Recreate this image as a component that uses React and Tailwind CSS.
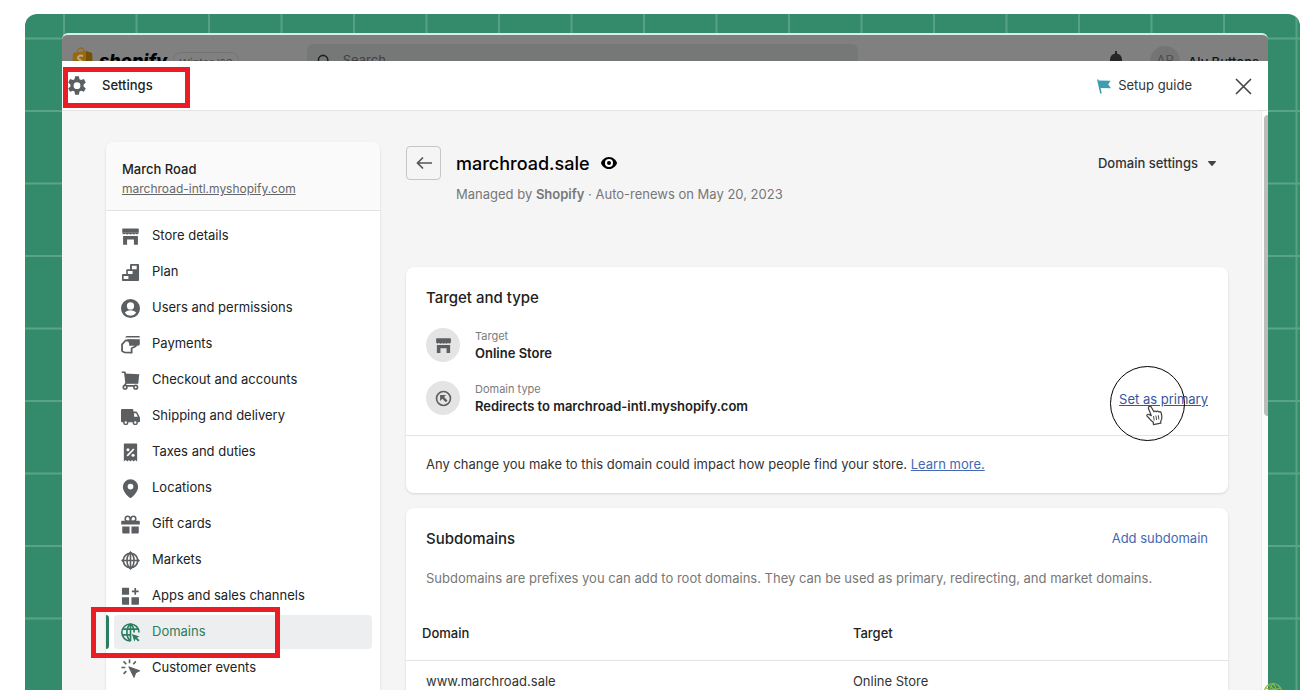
import React from "react";

function Icon({ children, className = "size-[19px]" }) {
  return (
    <svg viewBox="0 0 20 20" fill="currentColor" aria-hidden="true" className={`shrink-0 ${className}`}>
      {children}
    </svg>
  );
}

const storePaths = (
  <>
    <path d="M2 1.5h16a.7.7 0 0 1 .7.7V6h-17.4V2.2a.7.7 0 0 1 .7-.7Z" />
    <path d="M1.3 6h17.4a1.9 1.9 0 0 1-3.5.8 1.9 1.9 0 0 1-3.4 0 1.9 1.9 0 0 1-3.5 0 1.9 1.9 0 0 1-3.5 0A1.9 1.9 0 0 1 1.3 6Z" />
    <path d="M2.2 9.4h15.6v9.4h-4.2v-5.6H6.4v5.6H2.2Z" />
  </>
);

const icons = {
  store: storePaths,
  plan: (
    <path
      fillRule="evenodd"
      d="M10.5 1H18a1 1 0 0 1 1 1v16a1 1 0 0 1-1 1H2a1 1 0 0 1-1-1v-5.500a1 1 0 0 1 1-1h3.500V7.500a1 1 0 0 1 1-1h3V2a1 1 0 0 1 1-1ZM11.500 3v3.500h5V3Zm-4.300 5.300v3.400h5V8.300Zm-4.400 5.400v3.200h5v-3.200Z"
    />
  ),
  user: (
    <path
      fillRule="evenodd"
      d="M10 0a10 10 0 1 0 0 20 10 10 0 0 0 0-20Zm0 3.500a3.800 3.800 0 1 1 0 7.600 3.800 3.800 0 0 1 0-7.600Zm0 14.200a7.500 7.500 0 0 1-6-3.100c1.200-1.700 3.400-2.700 6-2.700s4.800 1 6 2.700a7.500 7.500 0 0 1-6 3.100Z"
    />
  ),
  payments: (
    <>
      <path d="M6 1h13a.8.8 0 0 1 .8.8v.9H4.600A2 2 0 0 1 6 1Z" />
      <path d="M6.500 4.600h13.300v5a1.800 1.800 0 0 1-1.800 1.800h-3.500v-2H8.800Z" />
      <path
        d="M1.100 9.800 4.800 5.800h9.400v2.900H9.900l-.5 1.600h6.100v1.600l-4.300 2v4.700l-7.800-.4-2.300-1.300Z"
        fill="none"
        stroke="currentColor"
        strokeWidth="1.900"
        strokeLinejoin="round"
      />
    </>
  ),
  cart: (
    <>
      <path d="M3.800 2.600 19.200 3.500l-1 9.300H5.300Z" />
      <path d="M.8 1.300h3.300l1.300 11.300H18M5.400 12.600l-1.700 3.100h12.700" fill="none" stroke="currentColor" strokeWidth="1.800" strokeLinejoin="round" />
      <circle cx="4.300" cy="17" r="1.900" fill="white" stroke="currentColor" strokeWidth="1.700" />
      <circle cx="15.500" cy="17" r="1.900" fill="white" stroke="currentColor" strokeWidth="1.700" />
    </>
  ),
  truck: (
    <>
      <path fillRule="evenodd" d="M1 2.200h11a1 1 0 0 1 1 1v1.500h2.600c.7 0 1.300.4 1.600 1l2.500 4.800c.2.400.3.600.3 1V15a1 1 0 0 1-1 1H1a1 1 0 0 1-1-1V3.200a1 1 0 0 1 1-1Zm12.800 4.500v3.600h3.900l-1.800-3.600Z" />
      <circle cx="5" cy="16.300" r="2" fill="white" stroke="currentColor" strokeWidth="1.500" />
      <circle cx="15" cy="16.300" r="2" fill="white" stroke="currentColor" strokeWidth="1.500" />
    </>
  ),
  taxes: (
    <>
      <path d="M3.800.5h12.400a.8.8 0 0 1 .8.800V19.500l-2-1.500L13.200 19.500l-1.600-1.500L10 19.500l-1.600-1.500L6.800 19.500 5 18 3 19.500V1.300a.8.8 0 0 1 .8-.8Z" />
      <path d="m6.500 13.600 7-7.300" stroke="white" strokeWidth="1.800" />
      <circle cx="7.300" cy="7" r="1.600" fill="white" />
      <circle cx="12.700" cy="13" r="1.600" fill="white" />
    </>
  ),
  pin: <path fillRule="evenodd" d="M10 .3a8 8 0 0 0-8 8c0 4.700 4.600 9.300 6.800 11.200a1.800 1.800 0 0 0 2.400 0C13.400 17.600 18 13 18 8.300a8 8 0 0 0-8-8ZM10 11a3 3 0 1 1 0-6 3 3 0 0 1 0 6Z" />,
  gift: (
    <>
      <path d="M1.200 6h17.600a1 1 0 0 1 1 1v3H.2V7a1 1 0 0 1 1-1ZM1.300 12h7.700v7.500H2.300a1 1 0 0 1-1-1ZM11 12h7.700v6.500a1 1 0 0 1-1 1H11Z" />
      <path d="M9.600 6.600H6.700a2.600 2.600 0 1 1 2.900-2.800Zm.8 0h2.900a2.600 2.600 0 1 0-2.900-2.800Z" fill="none" stroke="currentColor" strokeWidth="1.600" />
    </>
  ),
  markets: (
    <>
      <g fill="none" stroke="currentColor" strokeWidth="1.700">
        <circle cx="10" cy="10" r="7.600" />
        <ellipse cx="10" cy="10" rx="3.700" ry="7.600" />
        <path d="M10 2v16M2 10h16" />
      </g>
      <path d="m10 0 2.400 2.700H7.600ZM10 20l2.400-2.700H7.600ZM0 10l2.700-2.400v4.800ZM20 10l-2.700-2.400v4.800Z" />
    </>
  ),
  apps: (
    <>
      <path d="M1.800.8h6.700v7.400H1V1.600a.8.8 0 0 1 .8-.8ZM1 10.800h7.500v8H1.800a.8.8 0 0 1-.8-.8ZM11 10.800h7.900V18a.8.8 0 0 1-.8.8H11Z" />
      <path d="M15 1v7.200M11.400 4.600h7.200" stroke="currentColor" strokeWidth="1.800" />
    </>
  ),
  domains: (
    <>
      <g fill="none" stroke="currentColor" strokeWidth="1.700">
        <path d="M18.900 10A9 9 0 1 0 10 19" />
        <path d="M10 1C7.500 3 6.200 6.300 6.200 10s1.300 7 3.800 9M10 1c2.400 2 3.800 5 3.900 9M10 1v9M1.900 6.500h16.200M1 12.500h9M10 10v9" />
      </g>
      <path d="m11.500 11.500 8 2.600-2.700 1.400 2.700 2.600-1.500 1.500-2.600-2.700-1.400 2.600Z" />
    </>
  ),
  events: (
    <>
      <path d="m8.200 8.200 11.600 4.200-4.300 2.200-1.800 4.900Z" strokeLinejoin="round" stroke="currentColor" />
      <path d="M9 .4v4.200M2.700 2.500l2.900 3M15.600 2.500l-2.700 3M.4 9h4.200M2.700 15.700l2.900-2.900" stroke="currentColor" strokeWidth="1.700" fill="none" />
    </>
  ),
  gear: (
    <path
      fillRule="evenodd"
      d="M8.100.3h3.800l.6 2.900 1.600.9 2.800-1 1.900 3.300-2.200 2v2l2.200 2-1.900 3.300-2.800-1-1.600.9-.6 3.100H8.100l-.6-3.100-1.600-.9-2.800 1-1.900-3.300 2.200-2v-2l-2.200-2 1.900-3.300 2.800 1 1.600-.9ZM10 6.300a3.400 3.400 0 1 0 0 6.800 3.400 3.400 0 0 0 0-6.800Z"
    />
  ),
};

const navItems = [
  ["store", "Store details"],
  ["plan", "Plan"],
  ["user", "Users and permissions"],
  ["payments", "Payments"],
  ["cart", "Checkout and accounts"],
  ["truck", "Shipping and delivery"],
  ["taxes", "Taxes and duties"],
  ["pin", "Locations"],
  ["gift", "Gift cards"],
  ["markets", "Markets"],
  ["apps", "Apps and sales channels"],
  ["domains", "Domains"],
  ["events", "Customer events"],
];

function GridBackdrop() {
  return (
    <svg className="absolute inset-0 size-full" aria-hidden="true">
      <defs>
        <pattern id="grid" x="38" y="23.500" width="72.500" height="72.500" patternUnits="userSpaceOnUse">
          <path d="M1 0v72.500M0 1h72.500" stroke="#58a586" strokeWidth="1.800" />
        </pattern>
      </defs>
      <rect width="100%" height="100%" fill="url(#grid)" />
    </svg>
  );
}

function AdminBar() {
  return (
    <div className="flex h-[28px] items-start overflow-hidden rounded-t-md border-t-2 border-[#dcebe4] bg-[#808080] pl-[10px] pr-[9px] text-[#151515]">
      <svg viewBox="0 0 21 24" className="mt-[12px] h-[24px] w-[21px] shrink-0" aria-hidden="true">
        <path d="m1 6 13-2 6 2 1 18H0Z" fill="#98690f" />
        <path d="m14 4 6 2 1 18h-7Z" fill="#75500b" />
        <path d="M5 6c0-3 2-5 4-5s3 2 3 4" fill="none" stroke="#98690f" strokeWidth="1.300" />
        <path d="M11 9c-3-1-5 0-5 2s4 2 4 4-3 2-5 1" fill="none" stroke="#b9aa8d" strokeWidth="2" />
      </svg>
      <span className="mt-[12px] ml-[6px] text-[18px] leading-7 font-extrabold italic text-black">shopify</span>
      <span className="mt-[17px] ml-[6px] rounded-lg border border-[#747474] px-[5px] text-[11px] leading-[20px] text-[#4a4a4a]">Winter ’23</span>
      <div className="mt-[9px] ml-[68px] flex h-[34px] w-[551px] items-center gap-[11px] rounded-md bg-[#767877] pl-[10px] text-[13px] text-[#414141]">
        <svg viewBox="0 0 16 16" className="size-[15px]" fill="none" stroke="#222" strokeWidth="1.700" aria-hidden="true">
          <circle cx="6.500" cy="6.500" r="5" />
          <path d="m10 10 5 5" />
        </svg>
        <span>Search</span>
      </div>
      <svg viewBox="0 0 14 20" className="mt-[16px] ml-auto h-[20px] w-[14px] shrink-0" fill="#262626" aria-hidden="true">
        <path d="M6 0h2v2.500c3 .6 5 3 5 6V14l1 2H0l1-2V8.500c0-3 2-5.400 5-6Z" />
      </svg>
      <span className="mt-[11px] ml-[27px] flex size-[30px] items-center justify-center rounded-full bg-[#747474] text-[13px] text-[#4d4d4d]">AR</span>
      <span className="mt-[17px] ml-[8px] text-[13px] leading-5 font-medium">Aly Buttons</span>
    </div>
  );
}

function SettingsBar() {
  return (
    <header className="relative flex h-[50px] items-center border-b border-[#e3e3e3] bg-white pt-px pr-[16px] pl-[5px]">
      <Icon className="size-[20px] text-[#5c5f62]">{icons.gear}</Icon>
      <h1 className="ml-[15px] text-[13px] font-medium">Settings</h1>
      <div className="absolute top-[6px] left-[1px] h-[41px] w-[127px] border-5 border-[#ea1c24]" />
      <button className="ml-auto flex items-center gap-[7px] text-[13px] text-[#333]">
        <svg viewBox="0 0 14 15" className="h-[15px] w-[14px]" fill="#3f9db0" aria-hidden="true">
          <path d="M0 .5h1.300l.3 1L13.500 1.700 11.200 5.400 14 9.300 3.600 9l1.200 5.500H3.200Z" />
        </svg>
        Setup guide
      </button>
      <button aria-label="Close" className="ml-[43px]">
        <svg viewBox="0 0 17 17" className="size-[17px]" fill="none" stroke="#444" strokeWidth="1.600" aria-hidden="true">
          <path d="m1 1 15 15M16 1 1 16" />
        </svg>
      </button>
    </header>
  );
}

function Sidebar() {
  return (
    <aside className="mt-[31px] w-[274px] shrink-0 rounded-t-lg bg-white shadow">
      <div className="rounded-t-lg border-b border-[#e3e3e3] bg-[#fafafa] px-[16px] pt-[18px] pb-[12px] leading-[19px]">
        <h2 className="text-[13px] font-medium">March Road</h2>
        <a href="#store" className="block text-[12px] text-[#666] underline">marchroad-intl.myshopify.com</a>
      </div>
      <nav aria-label="Settings" className="flex flex-col gap-[2px] px-[8px] pt-[8px]">
        {navItems.map(([key, label]) => {
          const active = key === "domains";
          return (
            <a
              key={key}
              href={`#${key}`}
              aria-current={active ? "page" : undefined}
              className={
                active
                  ? "relative flex h-[34px] items-center gap-[12px] rounded bg-[#edeeef] px-[7px] text-[13px] text-[#2b7d60]"
                  : "flex h-[34px] items-center gap-[12px] px-[7px] text-[13px] text-[#202223]"
              }
            >
              <Icon className={active ? "size-[19px] text-[#2b7d60]" : "size-[19px] text-[#5c5f62]"}>{icons[key]}</Icon>
              {label}
              {active && (
                <>
                  <span className="absolute top-0 left-[-8px] h-full w-[3px] rounded-r bg-[#2b7d60]" />
                  <span className="absolute top-[-8px] left-[-23px] h-[51px] w-[189px] border-5 border-[#ea1c24]" />
                </>
              )}
            </a>
          );
        })}
      </nav>
    </aside>
  );
}

function Detail({ icon, label, value, children }) {
  return (
    <div className="flex h-[34px] items-center">
      <span className="flex size-[34px] shrink-0 items-center justify-center rounded-full bg-[#e4e4e5] text-[#5c5f62]">{icon}</span>
      <dl className="ml-[15px]">
        <dt className="text-[11px] leading-[17px] text-[#7b7b7b]">{label}</dt>
        <dd className="text-[13px] leading-[17px] font-semibold">{value}</dd>
      </dl>
      {children}
    </div>
  );
}

function PointerMark() {
  return (
    <>
      <span className="pointer-events-none absolute top-[-20px] left-[-9px] size-[75px] rounded-full border border-black" />
      <svg viewBox="0 0 20 22" className="pointer-events-none absolute top-[19px] left-[25px] h-[21px] w-[20px]" aria-hidden="true">
        <path
          d="M5.200 1.500c-1.200.4-1.300 1.500-.9 2.500l2.900 7.200-1.700-.9c-1.700-1-3.300-.3-3 .9.200.9 1.500 1.500 2.500 2.800 1.400 1.800 2.500 3.300 4.200 4l.2 2.500 7.800-1.500-.2-2c1.100-1.600 1.500-3.200 1.200-5l-.7-3.700c-.3-1.700-2-1.800-2.400-.8-.4-1.200-2.100-1.400-2.600-.4-.6-1-2.200-1-2.600 0L7.600 2.800c-.4-1.100-1.300-1.700-2.400-1.300Z"
          fill="white"
          stroke="#444"
          strokeWidth="1.300"
          strokeLinejoin="round"
        />
        <path d="m9.500 11.500.7 4.700M12 11l.7 4.700M14.500 10.700l.6 4.400" stroke="#444" strokeWidth="1" />
      </svg>
    </>
  );
}

function TargetCard() {
  return (
    <section className="rounded-lg bg-white shadow">
      <div className="flex flex-col gap-[19px] px-[20px] pt-[19px] pb-[20px]">
        <h3 className="text-[15px] leading-[23px] font-medium">Target and type</h3>
        <Detail label="Target" value="Online Store" icon={<Icon className="size-[17px]">{storePaths}</Icon>} />
        <Detail
          label="Domain type"
          value="Redirects to marchroad-intl.myshopify.com"
          icon={
            <Icon className="size-[17px]">
              <circle cx="10" cy="10" r="8.200" fill="none" stroke="currentColor" strokeWidth="1.900" />
              <path d="M6 6h7l-2.300 2.300 4 4-2 2-4-4L6 13Z" />
            </Icon>
          }
        >
          <span className="relative ml-auto">
            <a href="#primary" className="text-[13px] text-[#36559c] underline">Set as primary</a>
            <PointerMark />
          </span>
        </Detail>
      </div>
      <p className="border-t border-[#e3e3e3] px-[20px] py-[19px] text-[13px] leading-[19px] text-[#333]">
        Any change you make to this domain could impact how people find your store.{" "}
        <a href="#learn" className="text-[#4468b4] underline">Learn more.</a>
      </p>
    </section>
  );
}

function SubdomainsCard() {
  return (
    <section className="mt-[15px] rounded-t-lg bg-white shadow">
      <div className="flex items-center justify-between px-[20px] pt-[19px]">
        <h3 className="text-[15px] leading-[23px] font-medium">Subdomains</h3>
        <button className="text-[13px] text-[#4468b4]">Add subdomain</button>
      </div>
      <p className="px-[20px] pt-[19px] text-[13px] leading-[19px] text-[#777]">
        Subdomains are prefixes you can add to root domains. They can be used as primary, redirecting, and market domains.
      </p>
      <table className="mt-[19px] w-full table-fixed text-left text-[13px]">
        <thead>
          <tr className="h-[53px] border-b border-[#e3e3e3]">
            <th className="w-[54%] pl-[16px] font-medium">Domain</th>
            <th className="pl-[3px] font-medium">Target</th>
          </tr>
        </thead>
        <tbody>
          <tr className="h-[43px] text-[#333]">
            <td className="pl-[20px]">www.marchroad.sale</td>
            <td className="pl-[3px]">Online Store</td>
          </tr>
        </tbody>
      </table>
    </section>
  );
}

function DomainPage() {
  return (
    <main className="mt-[35px] min-w-0 flex-1">
      <div className="flex h-[121px] items-start">
        <button aria-label="Back" className="flex h-[34px] w-[35px] items-center justify-center rounded border border-[#c4c6c8] text-[#555]">
          <svg viewBox="0 0 16 14" className="h-[14px] w-[16px]" fill="none" stroke="currentColor" strokeWidth="1.700" aria-hidden="true">
            <path d="M16 7H1.500M7 1.500 1.500 7 7 12.500" />
          </svg>
        </button>
        <div className="ml-[15px]">
          <div className="flex h-[34px] items-center gap-[11px]">
            <h2 className="text-[18px] font-medium text-black">marchroad.sale</h2>
            <svg viewBox="0 0 16 12" className="h-[12px] w-[16px]" aria-hidden="true">
              <path d="M8 0C3.500 0 .9 3.500.2 5.300a1.900 1.900 0 0 0 0 1.400C.9 8.500 3.500 12 8 12s7.100-3.500 7.800-5.300a1.900 1.900 0 0 0 0-1.400C15.100 3.500 12.500 0 8 0Z" />
              <circle cx="8" cy="6" r="4" fill="white" />
              <circle cx="8" cy="6" r="2" />
            </svg>
          </div>
          <p className="mt-[5px] text-[13px] leading-[19px] text-[#777]">
            Managed by <strong className="font-semibold">Shopify</strong> · Auto-renews on May 20, 2023
          </p>
        </div>
        <button className="ml-auto flex h-[35px] items-center gap-[10px] pr-[12px] text-[13px] font-medium text-[#303234]">
          Domain settings
          <svg viewBox="0 0 8 5" className="h-[5px] w-[8px]" fill="#444" aria-hidden="true">
            <path d="M.7 0h6.600a.6.6 0 0 1 .5 1L4.500 4.700a.7.7 0 0 1-1 0L.2 1a.6.6 0 0 1 .5-1Z" />
          </svg>
        </button>
      </div>
      <TargetCard />
      <SubdomainsCard />
    </main>
  );
}

export default function App() {
  return (
    <div className="flex h-screen overflow-hidden bg-white pt-[14px] pl-[25px] font-['Inter','Liberation_Sans',sans-serif] text-[#202223]">
      <div className="relative flex min-w-0 flex-1 overflow-hidden rounded-t-[12px] bg-[#348b6c] pt-[19px] pr-[32px] pl-[37px]">
        <GridBackdrop />
        <div className="relative flex min-w-0 flex-1 flex-col">
          <AdminBar />
          <SettingsBar />
          <div className="flex min-h-0 flex-1 bg-[#f5f5f5]">
            <div className="flex min-w-0 flex-1 gap-[26px] overflow-hidden pr-[33px] pl-[44px]">
              <Sidebar />
              <DomainPage />
            </div>
            <div className="w-[7px] shrink-0 border-l border-[#ededed] bg-[#fcfcfc] pt-[4px] pl-[2px]">
              <div className="h-[301px] rounded-l bg-[#bcbcbc]" />
            </div>
          </div>
        </div>
        <svg viewBox="0 0 20 20" className="absolute right-[17px] bottom-[-12px] size-[20px]" fill="none" stroke="#8dba42" strokeWidth="1.100" aria-hidden="true">
          <circle cx="10" cy="10" r="8.500" />
          <path d="M3 6c4 2 10 2 14 0M10 1.500C6 5 6 14 10 18.500M10 1.500c4 3.500 4 12.500 0 17M5 3l9 6" />
        </svg>
      </div>
    </div>
  );
}
